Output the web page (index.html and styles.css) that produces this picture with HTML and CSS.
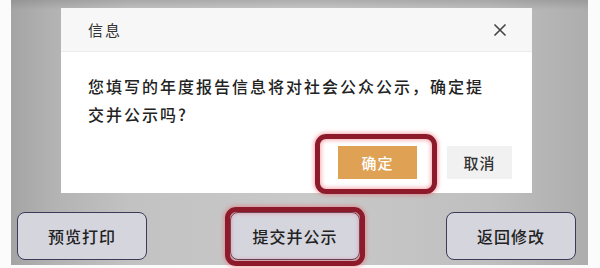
FILE: index.html
```html
<!DOCTYPE html>
<html lang="zh-CN">
<head>
<meta charset="utf-8">
<link rel="stylesheet" href="styles.css">
</head>
<body>
<div class="page">
  <div class="panel">
    <div class="modal">
      <div class="modal-head">
        <span class="title">信息</span>
        <svg class="close" width="14" height="14" viewBox="0 0 14 14"><path d="M1.5 1.5L12.5 12.5M12.5 1.5L1.5 12.5" stroke="#444" stroke-width="1.6" fill="none"/></svg>
      </div>
      <div class="modal-body">
        <p class="msg">您填写的年度报告信息将对社会公众公示，确定提交并公示吗?</p>
        <div class="modal-actions">
          <div class="btn-wrap">
            <button class="btn ok">确定</button>
            <span class="mark mark-ok"></span>
          </div>
          <button class="btn cancel">取消</button>
        </div>
      </div>
    </div>
    <div class="actions">
      <button class="pbtn">预览打印</button>
      <div class="btn-wrap mid">
        <button class="pbtn">提交并公示</button>
        <span class="mark mark-submit"></span>
      </div>
      <button class="pbtn last">返回修改</button>
    </div>
  </div>
</div>
</body>
</html>
```

FILE: styles.css
```css
html, body {
  margin: 0;
  padding: 0;
  background: #ffffff;
}
body {
  font-family: "Noto Sans CJK SC", "Noto Sans", sans-serif;
}
.page {
  width: 600px;
  height: 268px;
  overflow: hidden;
  background: #fbfbfb;
}
.panel {
  margin-left: 11px;
  width: 577px;
  height: 265px;
  display: flex;
  flex-direction: column;
  background:
    linear-gradient(to bottom, rgba(110,110,110,0.3) 0px, rgba(120,120,120,0) 10px),
    linear-gradient(to right, #a4a4a4 0px, #b2b2b2 40px, #c2c2c2 120px, #c9c9c9 300px, #bfbfbf 480px, #adadad 577px);
}
.modal {
  margin-top: 8px;
  margin-left: 50px;
  width: 471px;
  height: 185px;
  background: #ffffff;
  display: flex;
  flex-direction: column;
}
.modal-head {
  height: 44px;
  box-sizing: border-box;
  background: #f7f7f7;
  border-bottom: 1px solid #ececec;
  display: flex;
  align-items: center;
  justify-content: space-between;
  padding: 0 25px 0 27px;
}
.title {
  font-size: 15px;
  color: #333;
  letter-spacing: 2px;
}
.close {
  display: block;
}
.modal-body {
  padding: 20px 20px 0 27px;
}
.msg {
  margin: 0;
  width: 405px;
  font-size: 16px;
  font-weight: 500;
  line-height: 28px;
  letter-spacing: 2px;
  color: #222;
}
.modal-actions {
  margin-top: 18px;
  display: flex;
  justify-content: flex-end;
  gap: 30px;
}
.btn {
  height: 33px;
  border: none;
  font-family: inherit;
  font-size: 15px;
  font-weight: 500;
  letter-spacing: 1px;
  padding: 0;
}
.ok {
  width: 79px;
  background: #dfa255;
  color: #fff;
}
.cancel {
  width: 65px;
  background: #f1f1f1;
  color: #333;
}
.btn-wrap {
  position: relative;
  display: flex;
}
.mark {
  position: absolute;
  border: 5px solid #8c1a2a;
  border-radius: 11px;
  box-shadow: 0 0 4px 1px rgba(240,90,100,0.55), inset 0 0 4px 1px rgba(240,90,100,0.55);
  pointer-events: none;
}
.mark-ok {
  left: -23px;
  top: -12px;
  right: -20px;
  bottom: -15px;
}
.actions {
  margin-top: 19px;
  padding-left: 6px;
  display: flex;
}
.pbtn {
  width: 130px;
  height: 48px;
  box-sizing: border-box;
  border: 1.5px solid #3b3b58;
  border-radius: 8px;
  background: #d5d5de;
  font-family: inherit;
  font-size: 16px;
  font-weight: 500;
  letter-spacing: 1px;
  color: #222;
  padding: 0;
}
.mid {
  margin-left: 83px;
}
.last {
  margin-left: auto;
  margin-right: 12px;
}
.mark-submit {
  left: -5px;
  top: -5px;
  right: -5px;
  bottom: -6px;
}
```
